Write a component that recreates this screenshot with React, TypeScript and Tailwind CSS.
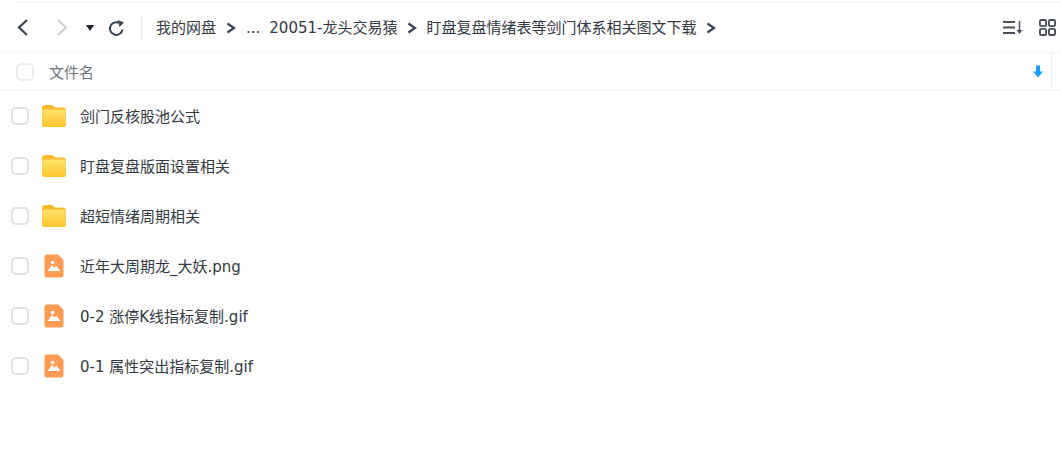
import React from 'react';

const font = { fontFamily: '"DejaVu Sans", "Noto Sans CJK SC", "Liberation Sans", sans-serif' };

const files = [
  { name: '剑门反核股池公式', type: 'folder' },
  { name: '盯盘复盘版面设置相关', type: 'folder' },
  { name: '超短情绪周期相关', type: 'folder' },
  { name: '近年大周期龙_大妖.png', type: 'image' },
  { name: '0-2 涨停K线指标复制.gif', type: 'image' },
  { name: '0-1 属性突出指标复制.gif', type: 'image' },
];

function Sep() {
  return (
    <svg width="10" height="12" viewBox="0 0 10 12" className="shrink-0 block">
      <path d="M1.500 1.500 8 6l-6.500 4.500" fill="none" stroke="#3b4350" strokeWidth="2.200" />
    </svg>
  );
}

function FolderIcon() {
  return (
    <svg width="26" height="24" viewBox="0 0 26 24">
      <defs>
        <linearGradient id="folderFill" x1="0" y1="0" x2="0" y2="1">
          <stop offset="0" stopColor="#ffe16b" />
          <stop offset="1" stopColor="#ffc62e" />
        </linearGradient>
      </defs>
      <path d="M1 4C1 2 2 1 4 1h6c1.500 0 2.200.5 3 1.500l.8 1H22c2 0 3 1 3 3v13c0 2-1 3-3 3H4c-2 0-3-1-3-3z" fill="#fdb92c" />
      <rect x="1" y="5.500" width="24" height="17.500" rx="2.500" fill="url(#folderFill)" />
    </svg>
  );
}

function ImageIcon() {
  return (
    <svg width="20" height="24" viewBox="0 0 20 24">
      <path d="M3 .5h11L19.500 6v15a2.500 2.500 0 0 1-2.500 2.500H3A2.500 2.500 0 0 1 .5 21V3A2.500 2.500 0 0 1 3 .5z" fill="#ff9b52" />
      <circle cx="8.500" cy="8.500" r="1.800" fill="#fff" />
      <path d="M3.500 17 8 11l2.500 2.800 1.700-2.300 4.300 5.500z" fill="#fff" />
    </svg>
  );
}

function Check({ className }: { className: string }) {
  return <span className={`block w-[18px] h-[18px] rounded-[5px] border-2 bg-white ${className}`} />;
}

export default function App() {
  return (
    <div className="w-[1061px] h-[476px] bg-white overflow-hidden text-[15px] text-[#33393f]" style={font}>
      <div className="h-[3px] ml-4 border-b border-[#f0f0f0]" />

      <div className="h-[50px] flex items-center pl-[17px] border-b border-[#f5f5f5]">
        <svg width="11" height="17" viewBox="0 0 11 17">
          <path d="M10 1 2 8.500l8 7.500" fill="none" stroke="#3b4350" strokeWidth="2.200" />
        </svg>
        <svg width="11" height="17" viewBox="0 0 11 17" className="ml-[29px]">
          <path d="M1 1l8 7.500L1 16" fill="none" stroke="#c9ccd0" strokeWidth="2" />
        </svg>
        <svg width="8" height="6" viewBox="0 0 8 6" className="ml-[18px]">
          <path d="M0 0h8L4 6z" fill="#1f2329" />
        </svg>
        <svg width="17" height="16" viewBox="0 0 17 16" className="ml-[14px]">
          <path d="M14.500 9.500A6.300 6.300 0 1 1 10.500 2.700" fill="none" stroke="#3b4350" strokeWidth="2" />
          <path d="M9.500 0 16 2.500 11.500 7z" fill="#3b4350" />
        </svg>
        <div className="w-px h-[24px] bg-[#e8e8e8] ml-[16px] mr-[14px]" />
        <span className="pt-px">我的网盘</span>
        <span className="ml-[10px]"><Sep /></span>
        <span className="ml-[10px] pt-px">...</span>
        <span className="ml-[9px] pt-px">20051-龙头交易猿</span>
        <span className="ml-[10px]"><Sep /></span>
        <span className="ml-[9px] pt-px">盯盘复盘情绪表等剑门体系相关图文下载</span>
        <span className="ml-[10px]"><Sep /></span>

        <div className="ml-auto flex items-center gap-[16px] pr-[5px]">
          <svg width="20" height="15" viewBox="0 0 20 15">
            <path d="M0 2h12M0 7.500h12M0 13h12" stroke="#4a5058" strokeWidth="2" />
            <path d="M16.500 1v10" stroke="#4a5058" strokeWidth="1.500" />
            <path d="M13.500 10h6l-3 4z" fill="#4a5058" />
          </svg>
          <svg width="17" height="17" viewBox="0 0 18 18">
            <rect x="1" y="1" width="6.500" height="6.500" rx="1.500" fill="none" stroke="#4a5058" strokeWidth="2" />
            <rect x="10.500" y="1" width="6.500" height="6.500" rx="1.500" fill="none" stroke="#4a5058" strokeWidth="2" />
            <rect x="1" y="10.500" width="6.500" height="6.500" rx="1.500" fill="none" stroke="#4a5058" strokeWidth="2" />
            <rect x="10.500" y="10.500" width="6.500" height="6.500" rx="1.500" fill="none" stroke="#4a5058" strokeWidth="2" />
          </svg>
        </div>
      </div>

      <div className="h-[38px] flex items-center pl-[16px] border-b border-[#f2f2f2]">
        <Check className="border-[#eceef0]" />
        <span className="ml-[15px] pt-[3px] text-[#70757a]">文件名</span>
        <div className="ml-auto flex items-center h-full">
          <svg width="10" height="13" viewBox="0 0 10 12" className="mr-[8px]">
            <path d="M3 0h4v6h3L5 12 0 6h3z" fill="#1a9bff" />
          </svg>
          <div className="w-px h-full bg-[#ececec] mr-[9px]" />
        </div>
      </div>

      <div>
        {files.map(file => (
          <div key={file.name} className="h-[50px] flex items-center pl-[11px]">
            <Check className="border-[#dde3e9]" />
            <div className="w-[26px] ml-[12px] flex justify-center">
              {file.type === 'folder' ? <FolderIcon /> : <ImageIcon />}
            </div>
            <span className="ml-[13px] pt-[2px]">{file.name}</span>
          </div>
        ))}
      </div>
    </div>
  );
}
